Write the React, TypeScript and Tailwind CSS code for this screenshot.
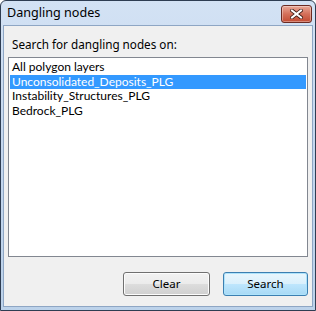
import React from "react";

const items = [
  "All polygon layers",
  "Unconsolidated_Deposits_PLG",
  "Instability_Structures_PLG",
  "Bedrock_PLG",
];

export default function App() {
  return (
    <div
      className="w-[316px] h-[311px] overflow-hidden bg-white"
      style={{ fontFamily: '"Noto Sans", "Open Sans", sans-serif' }}
    >
      <div className="w-full h-full flex flex-col rounded-t-[6px] border border-[#2e3d52] bg-gradient-to-b from-[#d3e2f4] via-[#c3d6ee] to-[#bcd2ea]">
        {/* Title bar */}
        <div className="h-[24px] shrink-0 flex items-start justify-between pl-[6px] pr-[3px]">
          <span className="mt-[4px] text-[12.6px] leading-[16px] text-black">Dangling nodes</span>
          <button className="mt-[4px] w-[31px] h-[18px] rounded-[3px] border border-[#6b2a22] bg-gradient-to-b from-[#e9a898] via-[#d4705a] to-[#c24a32] flex items-center justify-center shadow-[inset_0_0_0_1px_rgba(255,255,255,0.35)]">
            <svg width="13" height="10" viewBox="0 0 13 10">
              <path
                d="M2 1.5 L11 8.5 M11 1.5 L2 8.5"
                stroke="#3b1a14"
                strokeWidth="3.6"
                strokeLinecap="square"
                fill="none"
              />
              <path
                d="M2 1.5 L11 8.5 M11 1.5 L2 8.5"
                stroke="#ffffff"
                strokeWidth="2"
                strokeLinecap="square"
                fill="none"
              />
            </svg>
          </button>
        </div>
        {/* Client area */}
        <div className="flex-1 mx-[2px] mb-[3px] border border-[#8ea6c4] bg-[#f0f0f0] flex flex-col">
          <div className="pl-[8px] pt-[10px] h-[31px] text-[11.7px] leading-[16px] text-black">
            Search for dangling nodes on:
          </div>
          <div
            className="mx-[4px] h-[200px] border border-[#828790] bg-white pt-[2px] px-[1px] flex flex-col"
            style={{ fontFamily: 'Lato, "Noto Sans", sans-serif' }}
          >
            {items.map((it, i) => (
              <div
                key={it}
                className={
                  "h-[14.7px] leading-[14.7px] text-[12px] pl-[2px] overflow-hidden " +
                  (i === 1 ? "bg-[#3399ff] text-white" : "text-black")
                }
              >
                {it}
              </div>
            ))}
          </div>
          <div className="flex justify-end gap-[13px] pr-[4px] mt-[15px]">
            <button className="w-[87px] h-[24px] rounded-[3px] border border-[#707070] bg-[linear-gradient(to_bottom,#f2f2f2_0%,#ebebeb_50%,#dddddd_50%,#cfcfcf_100%)] shadow-[inset_0_0_0_1px_#fcfcfc] text-[11.5px] text-black">
              Clear
            </button>
            <button className="w-[85px] h-[24px] rounded-[3px] border border-[#3c7fb1] bg-[linear-gradient(to_bottom,#eaf6fd_0%,#d9f0fc_50%,#bee6fd_50%,#a7d9f5_100%)] shadow-[inset_0_0_0_1px_#aee3fb] text-[11.5px] text-black">
              Search
            </button>
          </div>
        </div>
      </div>
    </div>
  );
}
